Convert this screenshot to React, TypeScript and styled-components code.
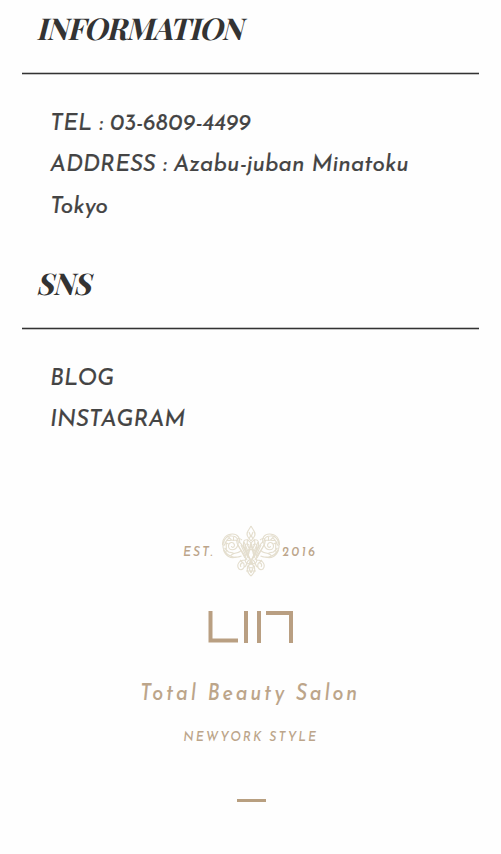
import React from "react";
import styled, { createGlobalStyle } from "styled-components";

const GlobalStyle = createGlobalStyle`
  *, *::before, *::after { box-sizing: border-box; }
  body { margin: 0; background: #fefefe; }
`;

const Page = styled.main`
  min-height: 854px;
  padding: 0 22px;
  overflow: hidden;
  font-family: "Josefin Sans", Lato, sans-serif;
  font-style: italic;
  color: #444;
`;

const Section = styled.section`
  height: 255px;
`;

const Heading = styled.h2`
  height: 74px;
  margin: 0;
  padding: 9px 0 0 17px;
  border-bottom: 1px solid #333;
  box-shadow: 0 1px 0 #c4c4c4, inset 0 -1px 0 #c4c4c4;
  font: normal 700 30px/38px "Playfair Display", "Liberation Serif", serif;
  color: #333;
`;

const Slant = styled.span`
  display: inline-block;
  transform: skewX(-14deg);
  letter-spacing: -1px;
`;

const List = styled.ul`
  margin: 0;
  padding: 30px 0 0 28px;
  list-style: none;
`;

const Line = styled.li`
  height: 41.3px;
  font-size: 22.6px;
  font-weight: 400;
  line-height: 41px;
  letter-spacing: 0.1px;
  white-space: nowrap;
  -webkit-text-stroke: 0.2px currentColor;
`;

const Footer = styled.footer`
  display: flex;
  flex-direction: column;
  align-items: center;
  padding-top: 15px;
  color: #bca58a;
`;

const Crest = styled.div`
  display: grid;
  grid-template-columns: 39px 60px 35px;
  align-items: center;
  height: 54px;
  margin-left: -2px;
  white-space: nowrap;
`;

const Small = styled.span<{ $spacing: number }>`
  padding-top: 2px;
  font-size: 14px;
  font-weight: 500;
  line-height: 18px;
  letter-spacing: ${(p) => p.$spacing}px;
  transform: scaleX(0.88);
  transform-origin: left;
`;

const Logo = styled.svg`
  display: block;
  margin: 32px 0 0 1px;
`;

const Tagline = styled.p`
  margin: 37px 0 0;
  font-size: 22.5px;
  font-weight: 500;
  line-height: 30px;
  letter-spacing: 3.2px;
  transform: scaleX(0.88);
`;

const Style = styled.p`
  margin: 19px 0 0;
  font-size: 14px;
  font-weight: 500;
  line-height: 18px;
  letter-spacing: 2.35px;
  transform: scaleX(0.88);
`;

const Dash = styled.div`
  width: 29px;
  height: 3px;
  margin: 52px 0 0 1px;
  background: #b89f80;
`;

const HalfOrnament = () => (
  <g>
    <path d="M29 18C24 12 20 15 22 22C24 28 28 32 29 40M27 20C23 17 22 21 25 27L28 34M20 15C15 11 13 16 17 22C20 27 23 30 25 35M17 17C20 18 23 25 26 33" />
    <g transform="translate(-0.5 3)">
      <path d="M20 28C13 31 5 28 2 21C0 15 4 7 10 8C16 8 18 13 16 18C14 23 7 23 7 18C7 14 12 13 13 17C13 20 10 20 10 18" />
      <path d="M2 18C5 15 4 11 8 10M4 25C6 22 4 19 5 15M9 28C11 24 18 26 20 22M5 12C8 14 12 10 16 13M3 20L7 24L12 25M3 14L7 16M7 9L10 12M12 9L12 13" />
      <path d="M1 17C1 10 5 6 11 6C16 6 19 10 18 15M2 22C4 28 9 31 15 29" />
    </g>
    <path d="M23 35C17 35 14 40 17 44C20 46 23 43 22 39C21 36 17 39 19 42M24 33C22 37 25 40 28 38M22 42C25 42 24 37 27 35" />
    <path d="M29 1C27 5 23 8 26 12L29 16M27 7L29 12M29 38C24 42 24 46 29 51M27 43L29 48M25 41L29 43M24 46L29 46" />
    <path d="M29 10L27 14M19 20L24 31M22 17L27 29M16 20L23 33M26 14C24 18 26 23 29 25M26 26C28 23 28 20 29 18M18 35L21 38M29 20L26 31L29 35L27 39" />
  </g>
);

const Ornament = () => (
  <svg width="60" height="54" viewBox="0 0 60 54" fill="none" stroke="#e4dece" strokeWidth="1.1">
    <HalfOrnament />
    <g transform="translate(58 0) scale(-1 1)">
      <HalfOrnament />
    </g>
  </svg>
);

export default function App() {
  return (
    <>
      <GlobalStyle />
      <Page>
        <Section>
          <Heading><Slant>INFORMATION</Slant></Heading>
          <List>
            <Line>TEL : 03-6809-4499</Line>
            <Line>ADDRESS : Azabu-juban Minatoku</Line>
            <Line>Tokyo</Line>
          </List>
        </Section>
        <Section>
          <Heading><Slant>SNS</Slant></Heading>
          <List>
            <Line>BLOG</Line>
            <Line>INSTAGRAM</Line>
          </List>
        </Section>
        <Footer>
          <Crest>
            <Small $spacing={2.2}>EST.</Small>
            <Ornament />
            <Small $spacing={2.5}>2016</Small>
          </Crest>
          <Logo width="86" height="32" viewBox="0 0 86 32" fill="none" stroke="#b99f82" strokeWidth="4">
            <path d="M2.5 0V29.5H30M38 0V32M51 0V32M58 2H83V32" />
          </Logo>
          <Tagline>Total Beauty Salon</Tagline>
          <Style>NEWYORK STYLE</Style>
          <Dash />
        </Footer>
      </Page>
    </>
  );
}
